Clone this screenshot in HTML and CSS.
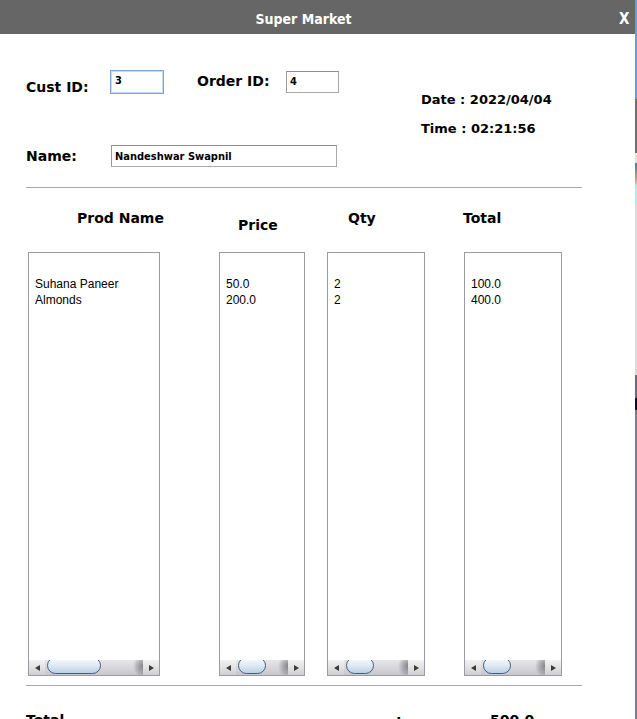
FILE: index.html
```html
<!DOCTYPE html>
<html>
<head>
<meta charset="utf-8">
<link rel="stylesheet" href="styles.css">
</head>
<body>
<div class="screen">
  <div class="window">
    <div class="titlebar">
      <span class="title">Super Market</span>
      <span class="close">X</span>
    </div>
    <div class="content">
      <div class="top">
        <div class="ids">
          <div class="row1">
            <label class="lbl lbl-cust">Cust ID:</label>
            <div class="field field-cust">3</div>
            <label class="lbl lbl-order">Order ID:</label>
            <div class="field field-order">4</div>
          </div>
          <div class="row2">
            <label class="lbl lbl-name">Name:</label>
            <div class="field field-name">Nandeshwar Swapnil</div>
          </div>
        </div>
        <div class="datetime">
          <div class="dt">Date : 2022/04/04</div>
          <div class="dt">Time : 02:21:56</div>
        </div>
      </div>
      <div class="sep"></div>
      <div class="heads">
        <div class="head head-prod">Prod Name</div>
        <div class="head head-price">Price</div>
        <div class="head head-qty">Qty</div>
        <div class="head head-total">Total</div>
      </div>
      <div class="lists">
        <div class="list list-prod">
          <div class="items"><div class="item">&nbsp;</div><div class="item">Suhana Paneer</div><div class="item">Almonds</div></div>
          <div class="sb"><div class="arr arr-l"></div><div class="track"><div class="thumb thumb-wide"></div></div><div class="arr arr-r"></div></div>
        </div>
        <div class="list list-price">
          <div class="items"><div class="item">&nbsp;</div><div class="item">50.0</div><div class="item">200.0</div></div>
          <div class="sb"><div class="arr arr-l"></div><div class="track"><div class="thumb"></div></div><div class="arr arr-r"></div></div>
        </div>
        <div class="list list-qty">
          <div class="items"><div class="item">&nbsp;</div><div class="item">2</div><div class="item">2</div></div>
          <div class="sb"><div class="arr arr-l"></div><div class="track"><div class="thumb"></div></div><div class="arr arr-r"></div></div>
        </div>
        <div class="list list-total">
          <div class="items"><div class="item">&nbsp;</div><div class="item">100.0</div><div class="item">400.0</div></div>
          <div class="sb"><div class="arr arr-l"></div><div class="track"><div class="thumb"></div></div><div class="arr arr-r"></div></div>
        </div>
      </div>
      <div class="sep sep2"></div>
      <div class="totals">
        <div class="tot-l">Total</div>
        <div class="tot-m">:</div>
        <div class="tot-r">500.0</div>
      </div>
    </div>
  </div>
  <div class="edge"></div>
</div>
</body>
</html>
```

FILE: styles.css
```css
html, body {
  margin: 0;
  padding: 0;
  height: 719px;
  overflow: hidden;
  background: #ffffff;
}

.screen {
  display: flex;
  width: 637px;
  height: 719px;
  overflow: hidden;
}

.window {
  width: 635px;
  height: 719px;
  background: #ffffff;
  display: flex;
  flex-direction: column;
  font-family: "DejaVu Sans", Verdana, sans-serif;
  color: #000;
}

.edge {
  width: 2px;
  height: 719px;
  background: linear-gradient(to bottom,
    #6b9be0 0, #6b9be0 99px,
    #6e6e6e 99px, #6e6e6e 153px,
    #e8e4dc 153px, #e8e4dc 163px,
    #3f7f9a 163px, #c9a08a 180px,
    #a8f0ea 186px, #a8f0ea 204px,
    #dcdcdc 204px, #dcdcdc 375px,
    #6a6a78 375px, #6a6a78 398px,
    #0c0c30 398px, #0c0c30 410px,
    #7c7c8c 410px, #7c7c8c 719px);
}

/* Title bar */
.titlebar {
  height: 34px;
  flex: none;
  box-sizing: border-box;
  background: #666666;
  display: flex;
  align-items: flex-start;
  padding-top: 11px;
  color: #ffffff;
  font-family: "DejaVu Sans Condensed", "DejaVu Sans", sans-serif;
  font-stretch: condensed;
  font-weight: bold;
  font-size: 14px;
  line-height: 16px;
}

.title {
  flex: 1;
  text-align: center;
}

.close {
  width: 28px;
  font-size: 15px;
  padding-left: 12px;
  box-sizing: border-box;
}

/* Content */
.content {
  padding-left: 26px;
  display: flex;
  flex-direction: column;
}

.top {
  display: flex;
  align-items: flex-start;
}

.ids {
  width: 395px;
  padding-top: 36px;
  display: flex;
  flex-direction: column;
}

.row1, .row2 {
  display: flex;
  align-items: flex-start;
}

.row2 {
  margin-top: 50px;
}

.lbl {
  font-weight: bold;
  font-size: 14px;
  line-height: 16px;
}

.lbl-cust {
  width: 84px;
  margin-top: 9px;
}

.lbl-order {
  width: 89px;
  margin-left: 33px;
  margin-top: 3px;
}

.lbl-name {
  width: 85px;
  margin-top: 3px;
}

.field {
  box-sizing: border-box;
  background: #fff;
  border: 1px solid #a9a9a9;
  border-top-color: #8e8e8e;
  border-left-color: #999;
  font-family: "DejaVu Sans Condensed", "DejaVu Sans", sans-serif;
  font-stretch: condensed;
  font-weight: bold;
  font-size: 11px;
  line-height: 13px;
  padding-left: 3px;
  display: flex;
  align-items: center;
}

.field-cust {
  width: 54px;
  height: 24px;
  border: 1px solid #7ea3d2;
  box-shadow: inset 0 0 0 1px #c8daf0;
  padding-left: 4px;
  padding-bottom: 3px;
}

.field-order {
  width: 53px;
  height: 22px;
  margin-top: 1px;
  padding-bottom: 1px;
}

.field-name {
  width: 226px;
  height: 22px;
}

.datetime {
  padding-top: 58px;
  display: flex;
  flex-direction: column;
  gap: 13px;
}

.dt {
  font-weight: bold;
  font-size: 13px;
  line-height: 16px;
}

.sep {
  width: 556px;
  height: 1px;
  background: #a7a7ad;
  margin-top: 20px;
}

.sep2 {
  margin-top: 9px;
}

/* Column heads */
.heads {
  display: flex;
  align-items: flex-start;
  height: 42px;
  margin-top: 22px;
  font-weight: bold;
  font-size: 14px;
  line-height: 16px;
}

.head-prod {
  margin-left: 51px;
  width: 161px;
}

.head-price {
  width: 110px;
  margin-top: 7px;
}

.head-qty {
  width: 115px;
}

/* Lists */
.lists {
  display: flex;
  margin-left: 2px;
}

.list {
  box-sizing: border-box;
  height: 424px;
  border: 1px solid #9b9ba3;
  display: flex;
  flex-direction: column;
}

.list-prod { width: 132px; }
.list-price { width: 86px; margin-left: 59px; }
.list-qty { width: 98px; margin-left: 22px; }
.list-total { width: 98px; margin-left: 39px; }

.items {
  flex: 1;
  padding-top: 7px;
  padding-left: 6px;
  font-family: "Liberation Sans", Arial, sans-serif;
  font-size: 12px;
  line-height: 16px;
  color: #000;
}

/* Scrollbar */
.sb {
  height: 15px;
  flex: none;
  display: flex;
  background: linear-gradient(to bottom, #f2f2f2 0%, #e4e4e4 45%, #cfcfd2 100%);
}

.arr {
  width: 16px;
  flex: none;
  display: flex;
  align-items: center;
  justify-content: center;
}

.arr-l::before {
  content: "";
  width: 0;
  height: 0;
  border-top: 3px solid transparent;
  border-bottom: 3px solid transparent;
  border-right: 5px solid #3c3c3c;
}

.arr-r::before {
  content: "";
  width: 0;
  height: 0;
  border-top: 3px solid transparent;
  border-bottom: 3px solid transparent;
  border-left: 5px solid #3c3c3c;
}

.track {
  flex: 1;
  overflow: hidden;
  display: flex;
  align-items: flex-start;
  background:
    radial-gradient(ellipse 10px 12px at 100% 40%, rgba(60,60,70,0.55) 0%, rgba(60,60,70,0.25) 60%, rgba(0,0,0,0) 100%),
    linear-gradient(to bottom, #e6e6e8 0%, #d8d8dc 50%, #c6c6cb 100%);
}

.thumb {
  flex: none;
  width: 28px;
  height: 17px;
  margin-top: -3px;
  margin-left: 2px;
  box-sizing: border-box;
  border: 1px solid #3f5f86;
  border-radius: 9px;
  background: linear-gradient(to bottom, #f6f9fc 0%, #e2ecf5 45%, #bcd0e3 100%);
}

.thumb-wide {
  width: 54px;
}

/* Totals */
.totals {
  display: flex;
  margin-top: 26px;
  font-weight: bold;
  font-size: 14px;
  line-height: 16px;
}

.tot-l { width: 370px; }
.tot-m { width: 94px; }
```
